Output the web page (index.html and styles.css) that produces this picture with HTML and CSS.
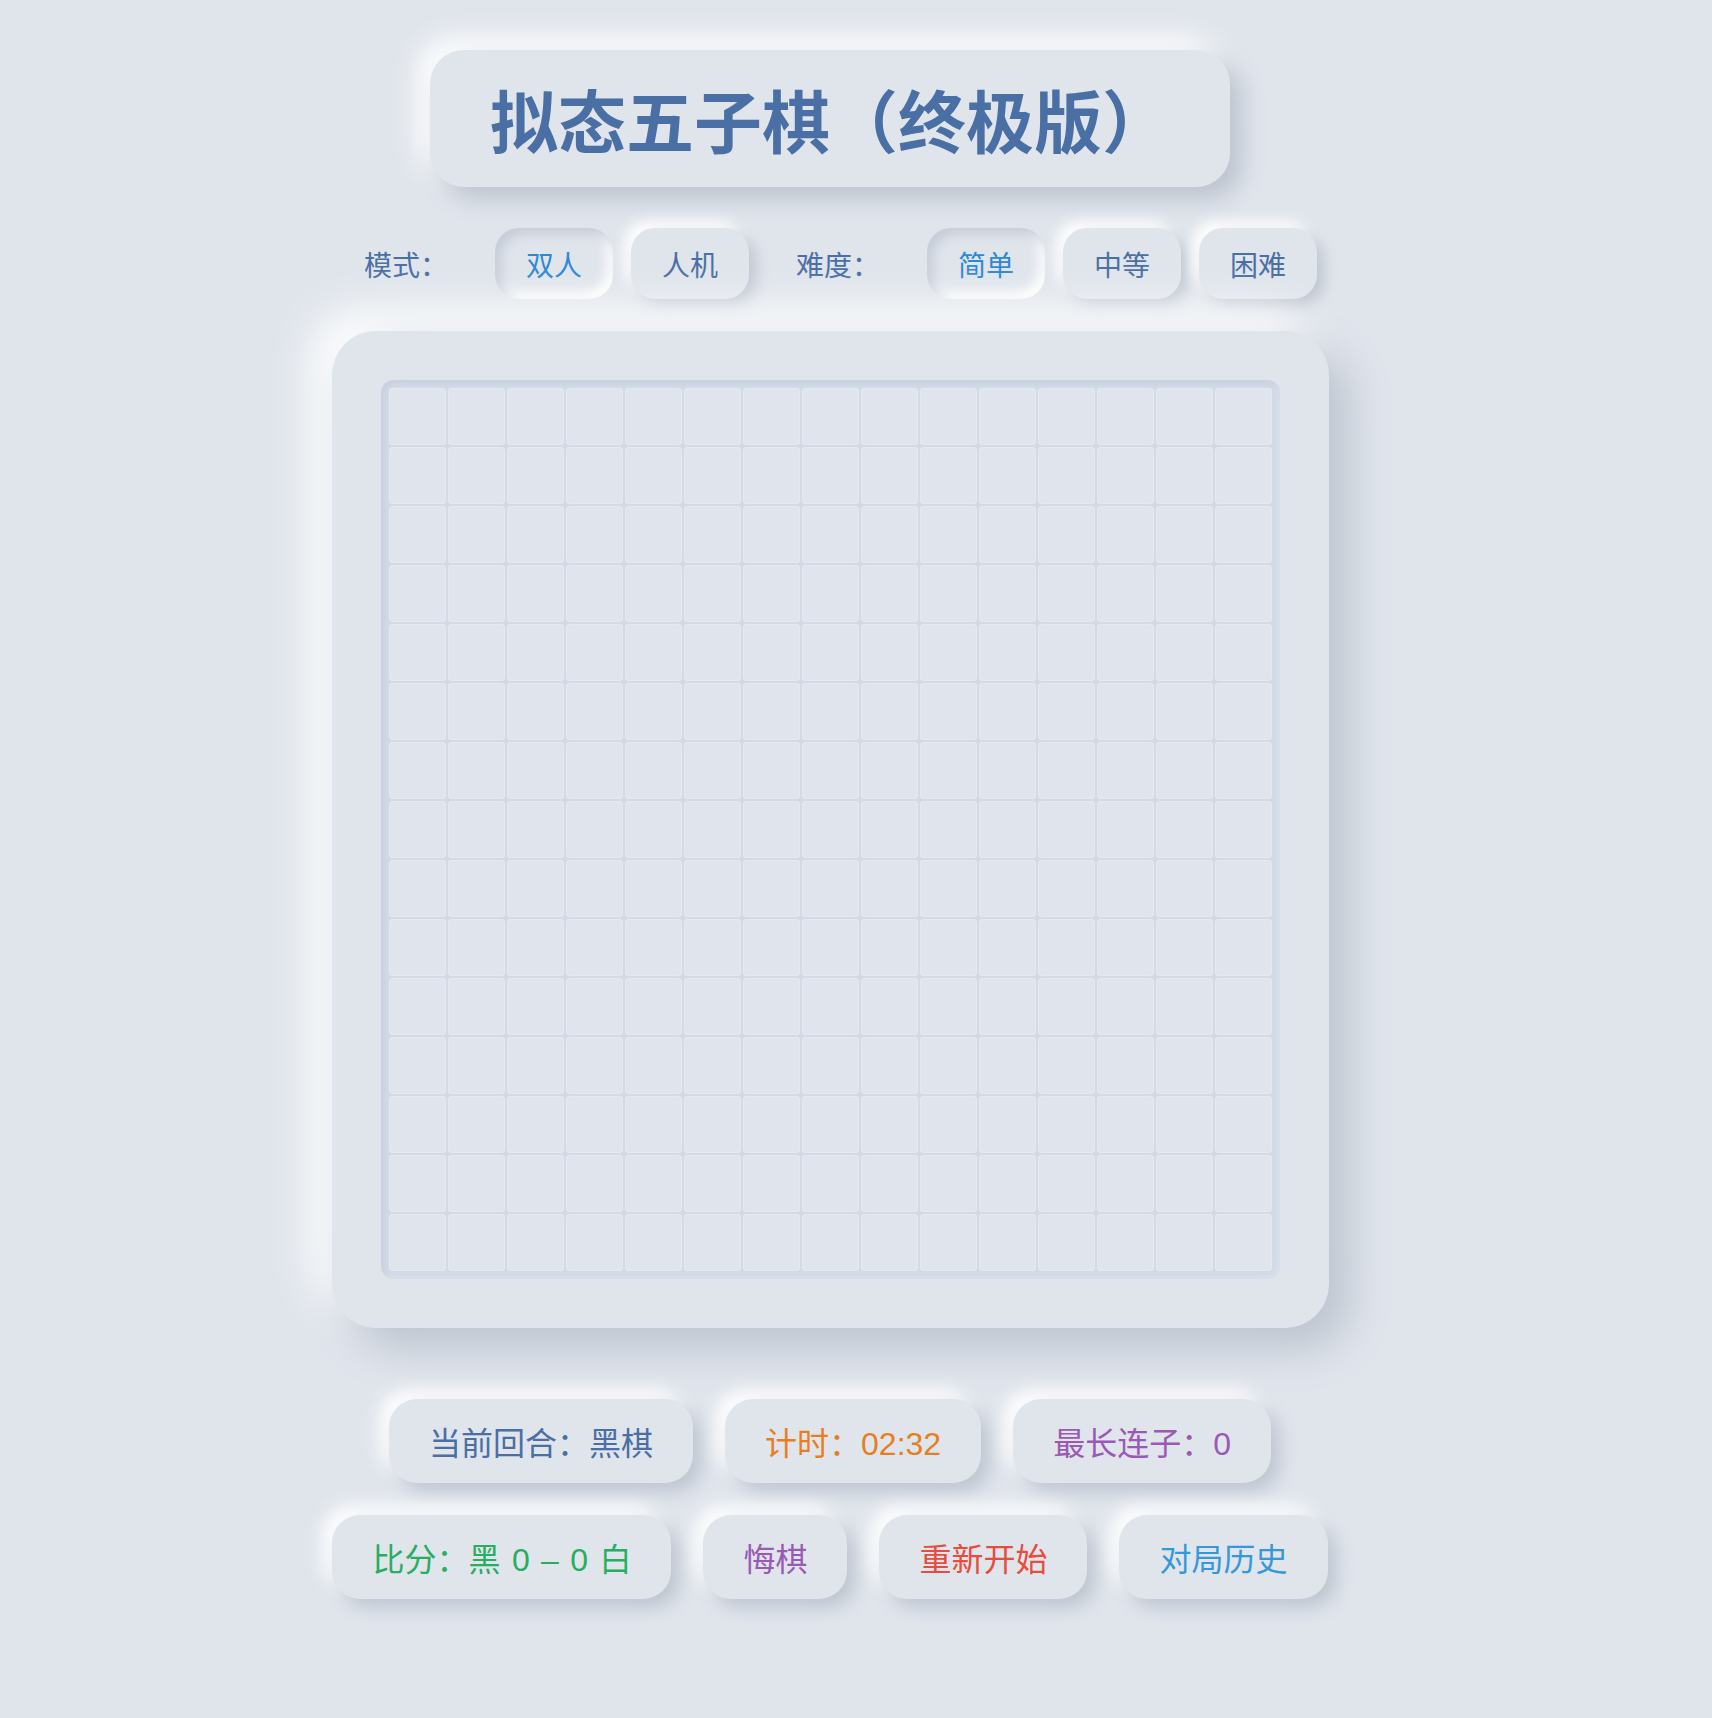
FILE: index.html
```html
<!DOCTYPE html>
<html lang="zh-CN">
<head>
    <meta charset="UTF-8">
    <meta name="viewport" content="width=device-width, initial-scale=1.0">
    <title>拟态五子棋（终极版）</title>
    <link rel="stylesheet" href="styles.css">
</head>
<body>
    <div class="app">
        <h1 class="title">拟态五子棋（终极版）</h1>

        <div class="controls">
            <span class="label">模式：</span>
            <button class="opt active">双人</button>
            <button class="opt">人机</button>
            <span class="label">难度：</span>
            <button class="opt active">简单</button>
            <button class="opt">中等</button>
            <button class="opt">困难</button>
        </div>

        <div class="board">
            <div class="grid" id="grid"></div>
        </div>

        <div class="info-row">
            <div class="pill turn">当前回合：黑棋</div>
            <div class="pill timer">计时：02:32</div>
            <div class="pill streak">最长连子：0</div>
        </div>

        <div class="info-row">
            <div class="pill score">比分：黑 0 – 0 白</div>
            <button class="pill undo">悔棋</button>
            <button class="pill restart">重新开始</button>
            <button class="pill history">对局历史</button>
        </div>
    </div>

    <script>
        var grid = document.getElementById('grid');
        for (var i = 0; i < 225; i++) {
            var cell = document.createElement('div');
            cell.className = 'cell';
            grid.appendChild(cell);
        }
    </script>
</body>
</html>
```

FILE: styles.css
```css
body {
    margin: 0;
    background-color: #e0e5ec;
    font-family: "Liberation Sans", "Noto Sans CJK SC", sans-serif;
    color: #4a6fa5;
}
.app {
    width: 1660px;
    display: flex;
    flex-direction: column;
    align-items: center;
    padding-top: 50px;
    padding-bottom: 80px;
}
.title {
    margin: 0;
    height: 137px;
    padding: 0 60px;
    display: flex;
    align-items: center;
    font-family: "Noto Sans CJK SC", sans-serif;
    font-size: 68px;
    font-weight: 700;
    color: #4a6fa5;
    background-color: #e0e5ec;
    border-radius: 34px;
    box-shadow: 12px 12px 24px #bcc3ce, -12px -12px 28px #ffffff;
}
.controls {
    margin-top: 41px;
    margin-right: 8px;
    display: flex;
    align-items: center;
    gap: 18px;
}
.label {
    font-size: 28px;
    margin: 0 29px;
    font-family: "Noto Sans CJK SC", sans-serif;
}
.opt {
    height: 71px;
    padding: 0 31px;
    border: none;
    border-radius: 24px;
    background-color: #e0e5ec;
    font-family: "Noto Sans CJK SC", sans-serif;
    font-size: 28px;
    color: #4a6fa5;
    box-shadow: 7px 7px 14px #c0c7d2, -7px -7px 14px #ffffff;
    cursor: pointer;
}
.opt.active {
    color: #2f88d6;
    box-shadow: inset 6px 6px 12px #c6ccd7, inset -6px -6px 12px #ffffff;
}
.board {
    margin-top: 32px;
    padding: 49px;
    border-radius: 44px;
    background-color: #e0e5ec;
    box-shadow: 20px 20px 44px #bcc3ce, -20px -20px 44px #ffffff;
}
.grid {
    display: grid;
    grid-template-columns: repeat(15, 57px);
    grid-auto-rows: 57px;
    gap: 2px;
    padding: 8px;
    border-radius: 13px;
    background-color: #d2d9e7;
    box-shadow: inset 3px 3px 6px #c8d0dd, inset -2px -2px 5px #dde3ec;
}
.cell {
    background-color: #dfe4ed;
    border-radius: 4px;
    box-shadow: inset 0 0 0 1px #e6e9ed;
}
.info-row {
    display: flex;
    gap: 32px;
    margin-top: 32px;
}
.board + .info-row {
    margin-top: 71px;
}
.pill {
    height: 84px;
    padding: 0 40px;
    display: flex;
    align-items: center;
    border: none;
    border-radius: 28px;
    background-color: #e0e5ec;
    font-family: "Liberation Sans", "Noto Sans CJK SC", sans-serif;
    font-size: 32px;
    box-shadow: 9px 9px 18px #bfc6d1, -9px -9px 18px #ffffff;
    white-space: pre;
}
button.pill {
    cursor: pointer;
}
.turn { color: #4a6fa5; }
.timer { color: #e67e22; }
.streak { color: #9b59b6; }
.score {
    color: #27ae60;
    word-spacing: 2.5px;
}
.undo { color: #9b59b6; }
.restart { color: #e74c3c; }
.history { color: #3498db; }
```
